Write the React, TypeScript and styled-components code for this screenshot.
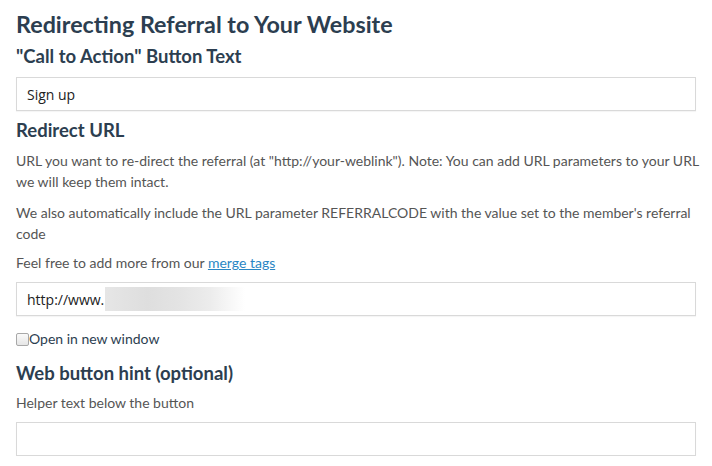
import React from "react";
import styled, { createGlobalStyle } from "styled-components";

const Global = createGlobalStyle`
  html, body { margin: 0; padding: 0; background: #fff; }
  body { font-family: Lato, "Open Sans", sans-serif; }
`;

const Page = styled.div`
  padding: 9px 16px 0 16px;
  width: 680px;
  display: flex;
  flex-direction: column;
`;

const Title = styled.h1`
  margin: 0;
  font-size: 23.3px;
  line-height: 30px;
  font-weight: 700;
  color: #2c3e50;
`;

const Heading = styled.h2<{ $top: number }>`
  margin: ${(p) => p.$top}px 0 0 0;
  font-size: 18.5px;
  line-height: 24px;
  font-weight: 700;
  color: #2c3e50;
`;

const Text = styled.p<{ $top: number }>`
  margin: ${(p) => p.$top}px -10px 0 0;
  font-size: 14px;
  line-height: 21px;
  color: #555;
`;

const Link = styled.a`
  color: #2a86c4;
  text-decoration: underline;
`;

const Field = styled.div<{ $top: number }>`
  margin-top: ${(p) => p.$top}px;
  height: 34px;
  box-sizing: border-box;
  border: 1px solid #d9d9d9;
  box-shadow: 0 1px 1px rgba(0, 0, 0, 0.04);
  display: flex;
  align-items: center;
  padding: 0 10px;
  font-family: "Open Sans", sans-serif;
  font-size: 14px;
  color: #222;
`;

const Blur = styled.span`
  display: inline-block;
  width: 140px;
  height: 24px;
  margin-left: 1px;
  background: linear-gradient(
    90deg,
    #e6e6e6 0%,
    #dedede 30%,
    #e4e4e4 55%,
    #ececec 75%,
    #ffffff 100%
  );
`;

const CheckRow = styled.label`
  margin-top: 14px;
  display: flex;
  align-items: center;
  font-size: 14px;
  line-height: 18px;
  color: #2c3e50;
`;

const Box = styled.span`
  width: 11px;
  height: 11px;
  border: 1px solid #a8a8a8;
  border-radius: 2px;
  background: linear-gradient(#fafafa, #e6e6e6);
`;

export default function App() {
  return (
    <>
      <Global />
      <Page>
        <Title>Redirecting Referral to Your Website</Title>
        <Heading $top={5}>"Call to Action" Button Text</Heading>
        <Field $top={9}>Sign up</Field>
        <Heading $top={7}>Redirect URL</Heading>
        <Text $top={8}>
          URL you want to re-direct the referral (at "http://your-weblink").
          Note: You can add URL parameters to your URL we will keep them intact.
        </Text>
        <Text $top={10}>
          We also automatically include the URL parameter REFERRALCODE with the
          value set to the member's referral code
        </Text>
        <Text $top={8}>
          Feel free to add more from our <Link href="#">merge tags</Link>
        </Text>
        <Field $top={9}>
          http://www.
          <Blur />
        </Field>
        <CheckRow>
          <Box />
          Open in new window
        </CheckRow>
        <Heading $top={13}>Web button hint (optional)</Heading>
        <Text $top={7}>Helper text below the button</Text>
        <Field $top={9} />
      </Page>
    </>
  );
}
